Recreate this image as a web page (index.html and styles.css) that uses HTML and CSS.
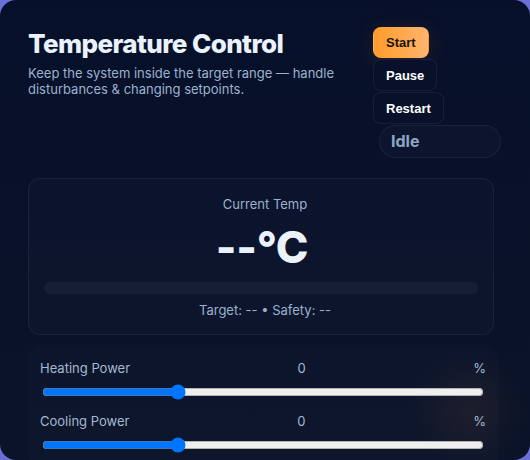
FILE: index.html
```html
<!DOCTYPE html>
<html lang="en">
<head>
<meta charset="utf-8">
<title>Temperature Control</title>
<link rel="stylesheet" href="styles.css">
</head>
<body>
<main class="app">
  <header class="header">
    <div class="intro">
      <h1 class="title">Temperature Control</h1>
      <p class="subtitle">Keep the system inside the target range — handle disturbances &amp; changing setpoints.</p>
    </div>
    <div class="controls">
      <button class="btn btn-primary" type="button">Start</button>
      <button class="btn" type="button">Pause</button>
      <button class="btn" type="button">Restart</button>
      <div class="status">Idle</div>
    </div>
  </header>

  <section class="readout">
    <div class="readout-label">Current Temp</div>
    <div class="readout-value">--°C</div>
    <div class="meter"><div class="meter-fill"></div></div>
    <div class="readout-meta">Target: -- • Safety: --</div>
  </section>

  <section class="sliders">
    <div class="control">
      <div class="control-row">
        <span class="control-name">Heating Power</span>
        <span class="control-value">0</span>
        <span class="control-unit">%</span>
      </div>
      <input class="range" type="range" min="0" max="100" value="30">
    </div>
    <div class="control">
      <div class="control-row">
        <span class="control-name">Cooling Power</span>
        <span class="control-value">0</span>
        <span class="control-unit">%</span>
      </div>
      <input class="range" type="range" min="0" max="100" value="30">
    </div>
  </section>
</main>
</body>
</html>
```

FILE: styles.css
```css
html, body {
  margin: 0;
  height: 100%;
}

body {
  background: #6a70d6;
  font-family: Inter, "Noto Sans", sans-serif;
  overflow: hidden;
}

.app {
  box-sizing: border-box;
  height: 460px;
  padding: 28px;
  border-radius: 16px;
  background:
    radial-gradient(circle at 470px 410px, rgba(255, 140, 60, 0.07), rgba(255, 140, 60, 0) 60px),
    linear-gradient(180deg, #07102a 0%, #0a1328 100%);
  overflow: hidden;
}

/* ---- header ---- */
.header {
  display: flex;
  justify-content: space-between;
  align-items: flex-start;
}

.intro {
  max-width: 320px;
}

.title {
  margin: 0;
  font-size: 26px;
  line-height: 1.2;
  font-weight: 800;
  letter-spacing: -0.6px;
  color: #eaf2fb;
}

.subtitle {
  margin: 6px 0 0;
  font-size: 13px;
  line-height: 16px;
  color: #9cb1cf;
}

.controls {
  display: flex;
  flex-direction: column;
  align-items: flex-start;
  gap: 1px;
  width: 129px;
  margin-top: -1px;
}

.btn {
  height: 32px;
  padding: 0 12px;
  border: 1px solid rgba(255, 255, 255, 0.06);
  border-radius: 8px;
  background: #09112a;
  color: #ffffff;
  font-family: "Liberation Sans", Arial, sans-serif;
  font-size: 13px;
  font-weight: 700;
}

.btn-primary {
  height: 31px;
  border-color: transparent;
  background: linear-gradient(90deg, #ff9c2a 0%, #ffb46e 100%);
  color: #1a1208;
  box-shadow: 0 4px 22px rgba(255, 150, 50, 0.12);
}

.status {
  box-sizing: border-box;
  width: 122px;
  height: 33px;
  margin-left: 6px;
  padding: 0 11px;
  border: 1px solid rgba(255, 255, 255, 0.06);
  border-radius: 999px;
  background: rgba(255, 255, 255, 0.02);
  color: #8ea5c6;
  font-size: 16px;
  font-weight: 700;
  line-height: 31px;
}

/* ---- current temperature ---- */
.readout {
  margin: 20px 8px 0 0;
  padding: 16px 15px 15px;
  border: 1px solid rgba(255, 255, 255, 0.06);
  border-radius: 12px;
  background: rgba(255, 255, 255, 0.015);
  text-align: center;
}

.readout-label {
  padding-left: 8px;
  font-size: 13px;
  line-height: 18px;
  color: #9cb1cf;
}

.readout-value {
  margin-top: 12px;
  padding-left: 2px;
  font-size: 44px;
  line-height: 44px;
  font-weight: 800;
  letter-spacing: -0.3px;
  color: #eaf2fb;
}

.meter {
  height: 12px;
  margin-top: 13px;
  border-radius: 999px;
  background: rgba(255, 255, 255, 0.04);
  overflow: hidden;
}

.meter-fill {
  width: 0;
  height: 100%;
}

.readout-meta {
  margin-top: 7px;
  padding-left: 8px;
  font-size: 13px;
  line-height: 18px;
  color: #9cb1cf;
}

/* ---- power sliders ---- */
.sliders {
  display: flex;
  flex-direction: column;
  gap: 10px;
  margin: 12px 4px 0 0;
  padding: 12px;
  border-radius: 12px;
  background: rgba(255, 255, 255, 0.015);
}

.control {
  display: flex;
  flex-direction: column;
  gap: 5px;
}

.control-row {
  display: flex;
  justify-content: space-between;
  font-size: 13px;
  line-height: 18px;
  color: #a6b8d2;
}

.range {
  margin: 2px;
  width: calc(100% - 4px);
}
```
